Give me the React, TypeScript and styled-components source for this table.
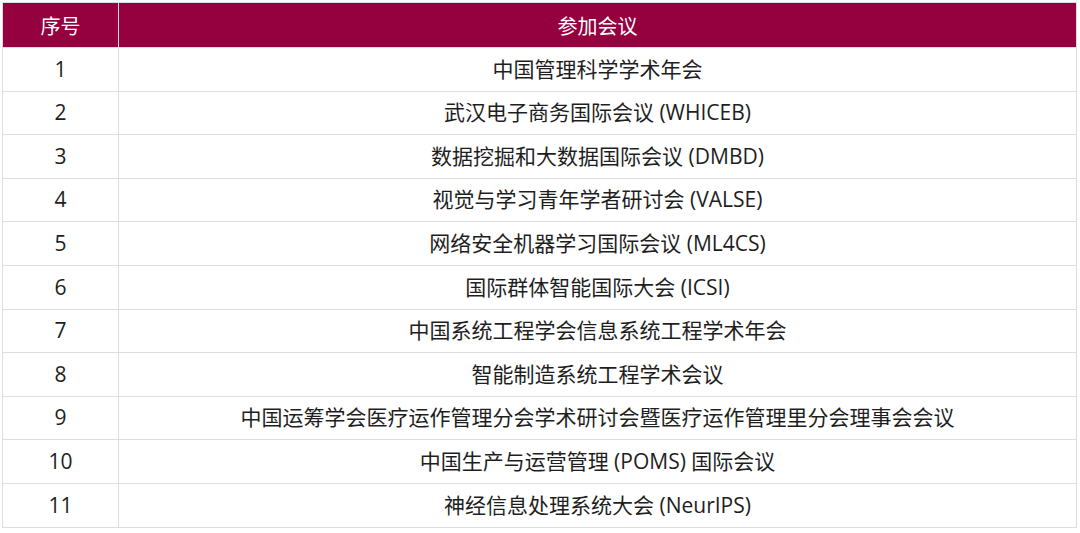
import React, { FC } from 'react';
import styled, { createGlobalStyle } from 'styled-components';

const GlobalStyle = createGlobalStyle`
  html, body {
    margin: 0;
    padding: 0;
    background: #ffffff;
  }
  body {
    font-family: "Open Sans", "Noto Sans CJK SC", sans-serif;
  }
`;

const Page = styled.div`
  padding: 2px 3px 0 2px;
`;

const Table = styled.table`
  width: 1075px;
  border-collapse: collapse;
  table-layout: fixed;
  font-family: "Open Sans", "Noto Sans CJK SC", sans-serif;
  font-size: 21px;
  color: #1e1e1e;
`;

const HeadCell = styled.th<{ $width?: number }>`
  width: ${({ $width }): string => ($width ? `${$width}px` : 'auto')};
  height: 44px;
  padding: 0;
  background-color: #95003f;
  color: #ffffff;
  font-weight: 400;
  font-size: 20px;
  text-align: center;
  vertical-align: middle;
  border: 1px solid #dcdcdc;
`;

const Row = styled.tr`
  height: 43.6px;
`;

const Cell = styled.td`
  padding: 0;
  text-align: center;
  vertical-align: middle;
  border: 1px solid #dedede;
  line-height: 1.2;
`;

const meetings: string[] = [
  '中国管理科学学术年会',
  '武汉电子商务国际会议 (WHICEB)',
  '数据挖掘和大数据国际会议 (DMBD)',
  '视觉与学习青年学者研讨会 (VALSE)',
  '网络安全机器学习国际会议 (ML4CS)',
  '国际群体智能国际大会 (ICSI)',
  '中国系统工程学会信息系统工程学术年会',
  '智能制造系统工程学术会议',
  '中国运筹学会医疗运作管理分会学术研讨会暨医疗运作管理里分会理事会会议',
  '中国生产与运营管理 (POMS) 国际会议',
  '神经信息处理系统大会 (NeurIPS)',
];

const App: FC = () => {
  return (
    <>
      <GlobalStyle />
      <Page>
        <Table>
          <thead>
            <tr>
              <HeadCell $width={115}>序号</HeadCell>
              <HeadCell>参加会议</HeadCell>
            </tr>
          </thead>
          <tbody>
            {meetings.map((name, i) => (
              <Row key={name}>
                <Cell>{i + 1}</Cell>
                <Cell>{name}</Cell>
              </Row>
            ))}
          </tbody>
        </Table>
      </Page>
    </>
  );
};

export default App;
